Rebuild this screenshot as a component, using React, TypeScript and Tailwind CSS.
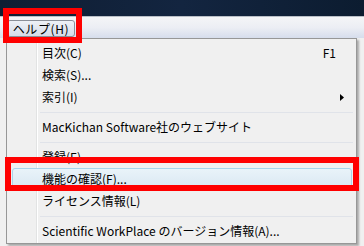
import React from "react";

const font = { fontFamily: "'Noto Sans CJK JP', 'Noto Sans', sans-serif" };

function Item({ label, shortcut, arrow, highlight }: { label: string; shortcut?: string; arrow?: boolean; highlight?: boolean }) {
  return (
    <div
      className={
        highlight
          ? "h-[22px] ml-[5px] mr-[4px] my-0 flex items-center rounded-[3px] border border-[#a9d4ea] bg-gradient-to-b from-[#e9f3f9] to-[#d9e8f2]"
          : "h-[22px] ml-[5px] mr-[4px] flex items-center border border-transparent"
      }
    >
      <span className="pl-[29px] text-[12px] leading-none text-black flex-1">{label}</span>
      {shortcut && <span className="text-[12px] leading-none text-black mr-[15px]">{shortcut}</span>}
      {arrow && (
        <svg className="mr-[7px]" width="4" height="7" viewBox="0 0 4 7">
          <path d="M0 0 L4 3.5 L0 7 Z" fill="#000" />
        </svg>
      )}
    </div>
  );
}

function Sep() {
  return (
    <div className="h-[8px] flex items-center pl-[33px] pr-[3px]">
      <div className="h-px w-full bg-[#e0e3e9]" />
    </div>
  );
}

export default function App() {
  return (
    <div className="relative w-[364px] h-[246px] overflow-hidden bg-[#f0f0f0]" style={font}>
      <div className="h-[16px] bg-gradient-to-r from-[#0f1e33] via-[#132540] to-[#0c1c30]" />
      <div className="h-px bg-[#b9bfc7]" />
      <div className="h-[21px] bg-gradient-to-b from-[#f4f5f7] via-[#eceef4] to-[#d6ddec] flex items-end pl-[7px] pb-px">
        <div className="h-[17px] w-[68px] rounded-[3px] border border-[#8a8f98] bg-gradient-to-b from-[#eef1f6] to-[#d5dce8] flex items-center justify-center text-[12px] leading-none text-black tracking-[0.6px]">
          ヘルプ(H)
        </div>
      </div>

      <div className="absolute left-[6px] top-[38px] w-[351px] h-[206px] border border-[#979797] bg-[linear-gradient(to_right,#f0f0f0_29px,#e2e3e3_29px,#e2e3e3_30px,#ffffff_30px,#ffffff_31px,#f0f0f0_31px)] shadow-[2px_2px_2px_rgba(0,0,0,0.3)] pt-[3px] flex flex-col">
        <Item label="目次(C)" shortcut="F1" />
        <Item label="検索(S)..." />
        <Item label="索引(I)" arrow />
        <Sep />
        <Item label="MacKichan Software社のウェブサイト" />
        <Sep />
        <Item label="登録(E)" />
        <Item label="機能の確認(F)..." highlight />
        <Item label="ライセンス情報(L)" />
        <Sep />
        <Item label="Scientific WorkPlace のバージョン情報(A)..." />
      </div>

      <div className="absolute left-[3px] top-[8px] w-[79px] h-[35px] border-[6px] border-[#ff0000]" />
      <div className="absolute left-[5px] top-[157px] w-[354px] h-[34px] border-[6px] border-[#ff0000]" />
    </div>
  );
}
